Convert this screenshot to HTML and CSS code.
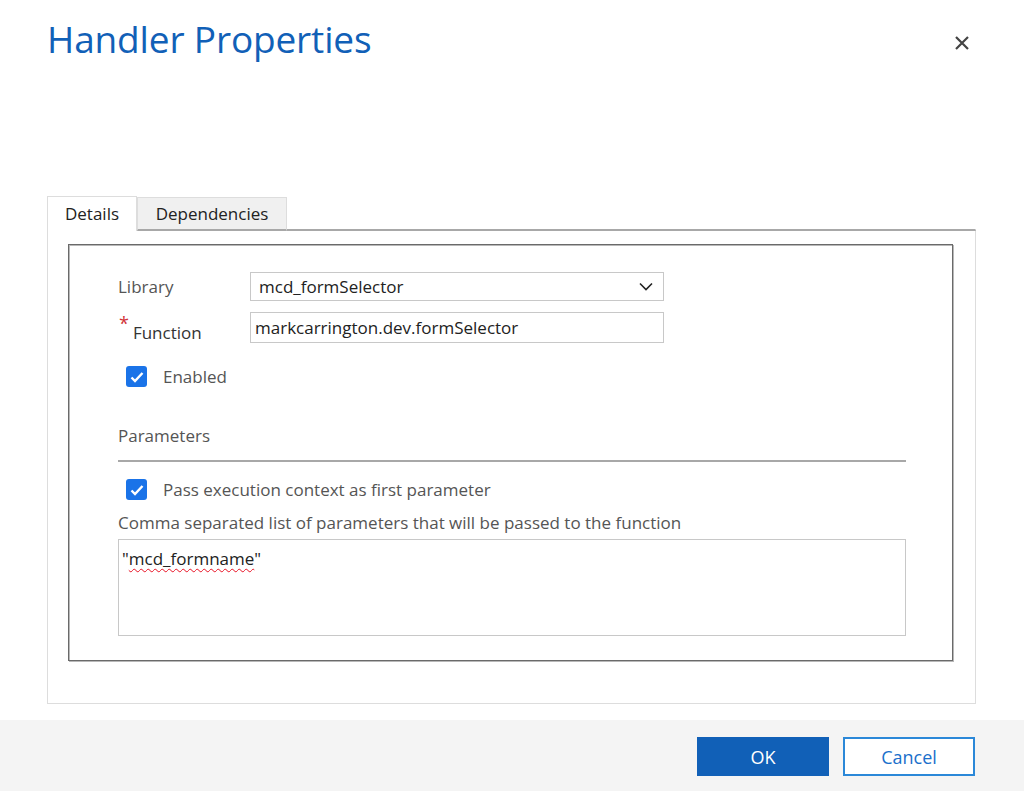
FILE: index.html
```html
<!DOCTYPE html>
<html>
<head>
<meta charset="utf-8">
<link rel="stylesheet" href="styles.css">
</head>
<body>
<div class="dialog">
  <div class="main">
    <div class="header">
      <h1 class="title">Handler Properties</h1>
      <svg class="close" width="16" height="16" viewBox="0 0 16 16"><path d="M2 2L14 14M14 2L2 14" stroke="#444" stroke-width="2.2" fill="none"/></svg>
    </div>
    <div class="tabbox">
      <div class="tabs">
        <div class="tab active">Details</div>
        <div class="tab">Dependencies</div>
        <div class="tab-fill"></div>
      </div>
      <div class="panel">
        <div class="frame">
          <div class="row">
            <div class="label">Library</div>
            <div class="select">
              <span>mcd_formSelector</span>
              <svg width="14" height="9" viewBox="0 0 14 9"><path d="M1 1.5L7 7.5L13 1.5" stroke="#222" stroke-width="1.6" fill="none"/></svg>
            </div>
          </div>
          <div class="row row-fn">
            <div class="label label-req"><span class="req">*</span>Function</div>
            <div class="input">markcarrington.dev.formSelector</div>
          </div>
          <div class="check-row enabled">
            <span class="checkbox"><svg width="14" height="12" viewBox="0 0 14 12"><path d="M1.5 6.5L5 10L12.5 2" stroke="#fff" stroke-width="2.4" fill="none"/></svg></span>
            <span class="check-label">Enabled</span>
          </div>
          <div class="section">Parameters</div>
          <div class="check-row pass">
            <span class="checkbox"><svg width="14" height="12" viewBox="0 0 14 12"><path d="M1.5 6.5L5 10L12.5 2" stroke="#fff" stroke-width="2.4" fill="none"/></svg></span>
            <span class="check-label">Pass execution context as first parameter</span>
          </div>
          <div class="hint">Comma separated list of parameters that will be passed to the function</div>
          <div class="textarea">"<span class="spell">mcd_formname</span>"</div>
        </div>
      </div>
    </div>
  </div>
  <div class="footer">
    <button class="btn btn-ok">OK</button>
    <button class="btn btn-cancel">Cancel</button>
  </div>
</div>
</body>
</html>
```
FILE: styles.css
```css
html, body {
  margin: 0;
  padding: 0;
  background: #fff;
}
body {
  font-family: "Open Sans", "Noto Sans", sans-serif;
  color: #333;
}
.dialog {
  height: 791px;
  display: flex;
  flex-direction: column;
}
.main {
  flex: 1;
  min-height: 0;
}
.header {
  display: flex;
  justify-content: space-between;
  align-items: flex-start;
  padding: 0 54px 0 47px;
  height: 196px;
}
.title {
  margin: 14px 0 0 0;
  font-size: 37px;
  font-weight: 400;
  line-height: 50px;
  color: #1160b7;
  letter-spacing: -0.15px;
}
.close {
  margin-top: 35px;
}
.tabbox {
  margin: 0 48px 0 47px;
}
.tabs {
  display: flex;
  align-items: flex-end;
  height: 35px;
}
.tab {
  font-size: 17px;
  color: #222;
  box-sizing: border-box;
  height: 34px;
  line-height: 31px;
  border: 1px solid #ddd;
  border-bottom: none;
  background: #f0f0f0;
  width: 150px;
  text-align: center;
}
.tab.active {
  width: 90px;
  height: 35px;
  background: #fff;
  border-color: #ddd;
  line-height: 33px;
  position: relative;
  z-index: 1;
}
.tab-fill {
  flex: 1;
}
.tabs .tab:not(.active),
.tab-fill {
  border-bottom: 2px solid #a8a8a8;
}
.tab-fill {
  height: 0;
  border-right: 1px solid #ddd;
}
.panel {
  border: 1px solid #ddd;
  border-top: none;
  padding: 14px 22px 42px 20px;
  margin-top: -1px;
}
.frame {
  box-sizing: border-box;
  height: 417px;
  border: 1px solid #6a6a6a;
  box-shadow: inset 1px 1px 0 #b8b8b8, 1px 1px 0 #b8b8b8;
  padding: 27px 46px 0 49px;
}
.row {
  display: flex;
  align-items: center;
}
.label {
  width: 132px;
  font-size: 17px;
  color: #555;
}
.label-req {
  color: #333;
  padding-top: 9px;
}
.req {
  color: #d13438;
  font-size: 18px;
  position: relative;
  top: -9px;
  margin-left: 1px;
  margin-right: 4px;
}
.select, .input {
  box-sizing: border-box;
  width: 414px;
  border: 1px solid #c8c8c8;
  font-size: 17px;
  color: #222;
}
.select {
  height: 29px;
  display: flex;
  align-items: center;
  justify-content: space-between;
  padding: 0 10px 0 8px;
}
.row-fn {
  margin-top: 11px;
  height: 31px;
}
.input {
  height: 31px;
  line-height: 29px;
  padding-left: 4px;
}
.check-row {
  display: flex;
  align-items: center;
  padding-left: 8px;
  height: 23px;
}
.enabled {
  margin-top: 22px;
}
.checkbox {
  width: 21px;
  height: 21px;
  border-radius: 3px;
  background: #1a73e8;
  display: flex;
  align-items: center;
  justify-content: center;
}
.check-label {
  font-size: 17px;
  color: #555;
  margin-left: 16px;
}
.section {
  margin-top: 36px;
  font-size: 17px;
  line-height: 23px;
  color: #555;
  padding-bottom: 13px;
  border-bottom: 2px solid #a8a8a8;
}
.pass {
  margin-top: 16px;
}
.hint {
  margin-top: 11px;
  font-size: 17px;
  color: #555;
  line-height: 22px;
}
.textarea {
  margin-top: 5px;
  box-sizing: border-box;
  height: 97px;
  border: 1px solid #c8c8c8;
  padding: 8px 3px;
  font-size: 17px;
  color: #222;
  line-height: 22px;
}
.spell {
  text-decoration: underline wavy #e81123;
  text-decoration-thickness: 1px;
  text-underline-offset: 3px;
}
.footer {
  height: 71px;
  flex-shrink: 0;
  background: #f4f4f4;
  display: flex;
  justify-content: flex-end;
  align-items: flex-start;
  padding: 17px 49px 0 0;
  box-sizing: border-box;
  gap: 14px;
}
.btn {
  width: 132px;
  height: 39px;
  font-family: "Open Sans", "Noto Sans", sans-serif;
  font-size: 18px;
  cursor: pointer;
}
.btn-ok {
  background: #1160b7;
  border: 1px solid #1160b7;
  color: #fff;
}
.btn-cancel {
  background: #fff;
  border: 2px solid #2b88d8;
  color: #1a6fcb;
}
```
